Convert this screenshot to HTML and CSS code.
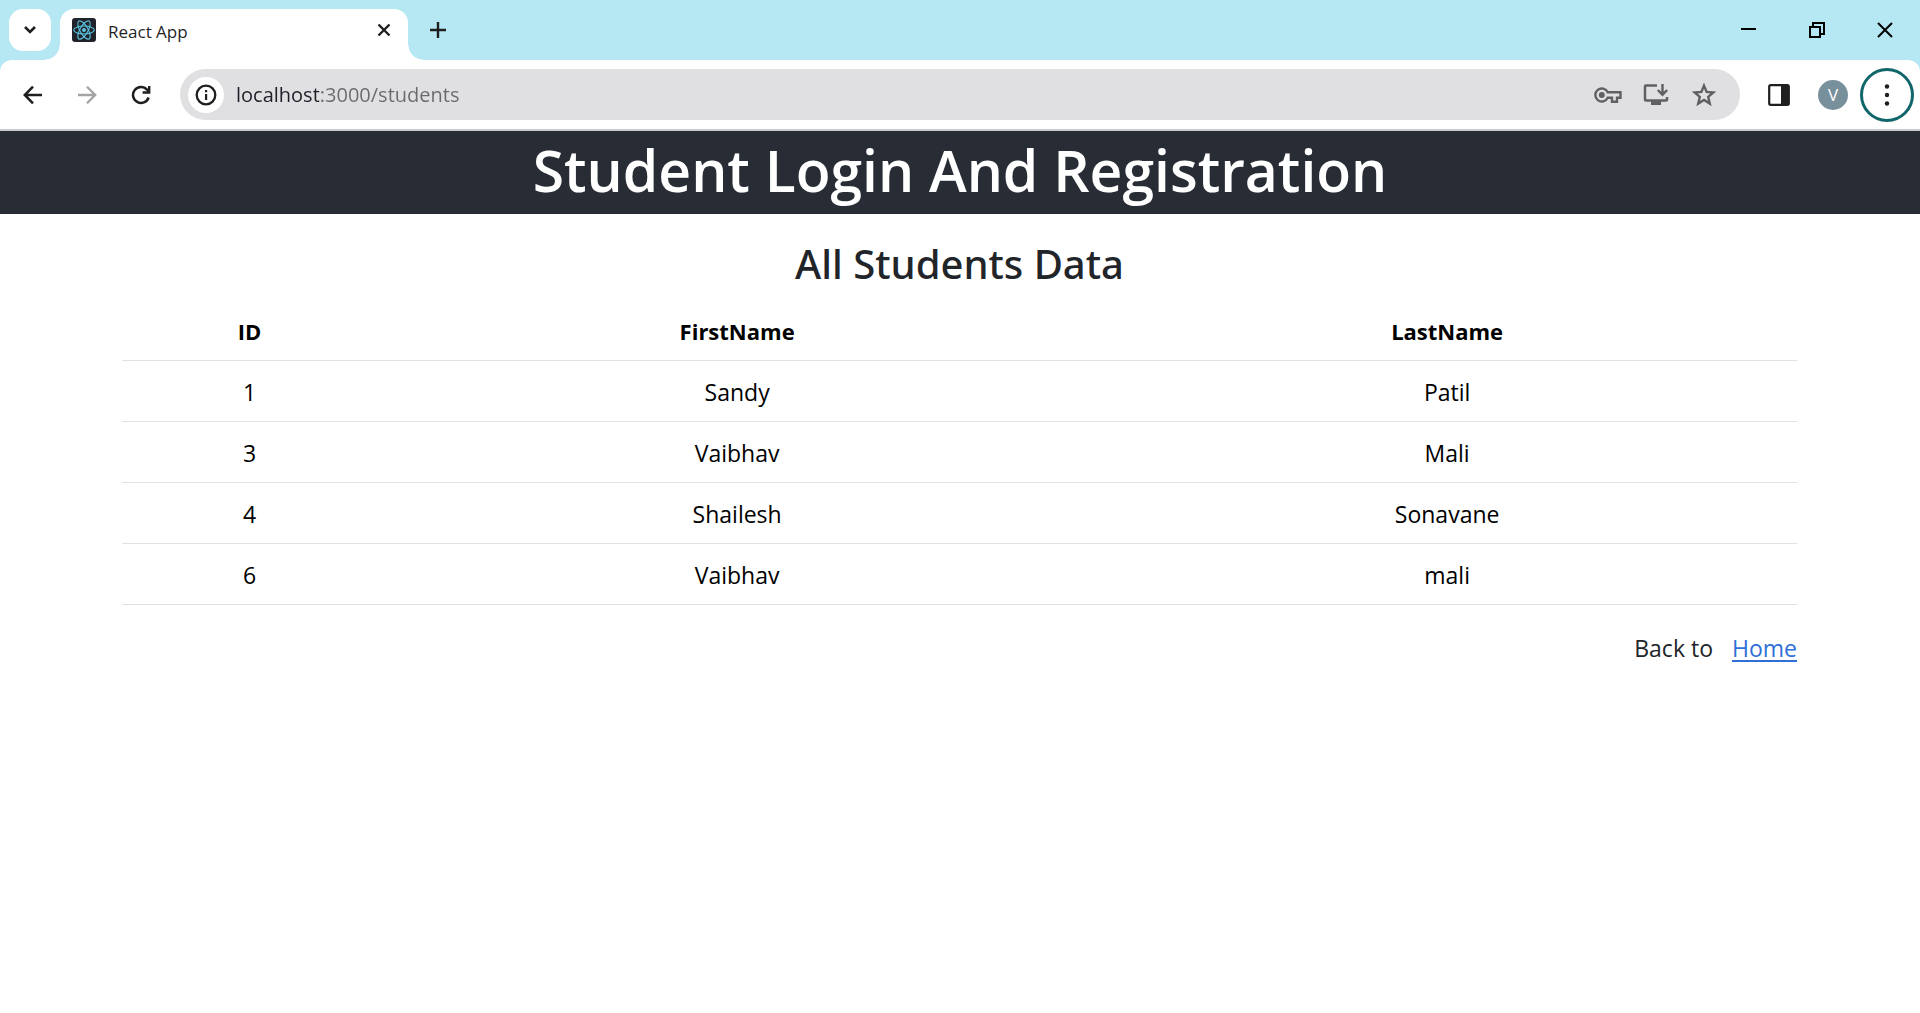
FILE: index.html
```
<!DOCTYPE html>
<html lang="en">
<head>
<meta charset="utf-8">
<meta name="viewport" content="width=device-width, initial-scale=1">
<title>React App</title>
<link rel="stylesheet" href="styles.css">
</head>
<body>
<div class="browser">
  <div class="tab-strip">
    <button class="tab-search" type="button" aria-label="Search tabs">
      <svg width="14" height="10" viewBox="0 0 14 10"><path d="M2 2l5 5 5-5" fill="none" stroke="#1f1f1f" stroke-width="2.6"/></svg>
    </button>
    <div class="tab">
      <svg class="favicon" width="24" height="24" viewBox="0 0 24 24">
        <rect width="24" height="24" rx="3" fill="#20232a"/>
        <g fill="none" stroke="#5cc4e0" stroke-width="1.1">
          <ellipse cx="12" cy="12" rx="10.3" ry="4"/>
          <ellipse cx="12" cy="12" rx="10.3" ry="4" transform="rotate(60 12 12)"/>
          <ellipse cx="12" cy="12" rx="10.3" ry="4" transform="rotate(120 12 12)"/>
        </g>
        <circle cx="12" cy="12" r="2" fill="#5cc4e0"/>
      </svg>
      <span class="tab-title">React App</span>
      <button class="icon-button" type="button" aria-label="Close tab">
        <svg width="14" height="14" viewBox="0 0 14 14"><path d="M1.500 1.500l11 11M12.500 1.500l-11 11" fill="none" stroke="#1f1f1f" stroke-width="2.400"/></svg>
      </button>
    </div>
    <button class="icon-button new-tab" type="button" aria-label="New tab">
      <svg width="16" height="16" viewBox="0 0 16 16"><path d="M8 0v16M0 8h16" fill="none" stroke="#1f1f1f" stroke-width="2.400"/></svg>
    </button>
    <div class="window-controls">
      <button class="icon-button" type="button" aria-label="Minimize">
        <svg width="16" height="16" viewBox="0 0 16 16"><path d="M0 6h15v2H0z" fill="#000"/></svg>
      </button>
      <button class="icon-button" type="button" aria-label="Restore">
        <svg width="16" height="16" viewBox="0 0 16 16"><path d="M1 5h10v10H1zM4 4.500V1h11v11h-3.500" fill="none" stroke="#000" stroke-width="2"/></svg>
      </button>
      <button class="icon-button" type="button" aria-label="Close window">
        <svg width="16" height="16" viewBox="0 0 16 16"><path d="M1 1l14 14M15 1L1 15" fill="none" stroke="#000" stroke-width="2"/></svg>
      </button>
    </div>
  </div>
  <div class="toolbar">
    <div class="nav-buttons">
      <button class="icon-button" type="button" aria-label="Back">
        <svg width="20" height="20" viewBox="0 0 20 20"><path d="M19 10H2.500M10 1.700L1.800 10l8.200 8.300" fill="none" stroke="#1f1f1f" stroke-width="2.500"/></svg>
      </button>
      <button class="icon-button" type="button" aria-label="Forward">
        <svg width="20" height="20" viewBox="0 0 20 20"><path d="M1 10h16.500M10 1.700l8.200 8.300-8.200 8.300" fill="none" stroke="#a3a3a3" stroke-width="2.300"/></svg>
      </button>
      <button class="icon-button" type="button" aria-label="Reload">
        <svg width="20" height="20" viewBox="0 0 20 20"><path d="M17.600 12.500A8 8 0 1 1 16 4.600l1.500 1.900" fill="none" stroke="#1f1f1f" stroke-width="2.500"/><path d="M18.200 1v6.500h-6.600" fill="none" stroke="#1f1f1f" stroke-width="2.400"/></svg>
      </button>
    </div>
    <div class="address-bar">
      <button class="site-info" type="button" aria-label="View site information">
        <svg width="22" height="22" viewBox="0 0 22 22"><circle cx="11" cy="11" r="9.300" fill="none" stroke="#1f1f1f" stroke-width="2.300"/><path d="M10 10h2.200v6H10zM10 6h2.200v2.200H10z" fill="#1f1f1f"/></svg>
      </button>
      <input class="address" type="text" value="localhost:3000/students" aria-label="Address">
      <button class="icon-button" type="button" aria-label="Passwords">
        <svg width="28" height="18" viewBox="0 0 28 18"><path d="M13.700 6.200A6.500 6.500 0 1 0 13.700 11.800H18v4h5v-4h3.500V6.200z" fill="none" stroke="#5f6062" stroke-width="2.400"/><circle cx="7.800" cy="9" r="3" fill="#5f6062"/></svg>
      </button>
      <button class="icon-button" type="button" aria-label="Install app">
        <svg width="26" height="24" viewBox="0 0 26 24"><path d="M14 2.500H3Q2 2.500 2 3.500v13Q2 17.500 3 17.500h20q1 0 1-1V14" fill="none" stroke="#5f6062" stroke-width="2.500"/><path d="M8 18h10v4H8z" fill="#5f6062"/><path d="M19.500 1v10.500M14.800 7l4.700 4.700L24.200 7" fill="none" stroke="#5f6062" stroke-width="2.400"/></svg>
      </button>
      <button class="icon-button" type="button" aria-label="Bookmark this page">
        <svg width="24" height="24" viewBox="0 0 24 24"><path d="M12 2.600l2.600 6.300 6.800.6-5.200 4.400 1.600 6.700-5.800-3.600-5.800 3.600 1.600-6.700-5.200-4.400 6.800-.6z" fill="none" stroke="#5f6062" stroke-width="2.400"/></svg>
      </button>
    </div>
    <div class="actions">
      <button class="icon-button" type="button" aria-label="Side panel">
        <svg width="22" height="22" viewBox="0 0 22 22"><rect x="1.200" y="1.200" width="19.600" height="19.600" rx="1.500" fill="none" stroke="#1f1f1f" stroke-width="2.200"/><path d="M13 1h8v20h-8z" fill="#1f1f1f"/></svg>
      </button>
      <button class="avatar" type="button" aria-label="Profile">V</button>
      <button class="menu" type="button" aria-label="Menu">
        <svg width="6" height="22" viewBox="0 0 6 22"><g fill="#1f1f1f"><circle cx="3" cy="2.500" r="2.200"/><circle cx="3" cy="11" r="2.200"/><circle cx="3" cy="19.500" r="2.200"/></g></svg>
      </button>
    </div>
  </div>
</div>

<header class="app-header"><h1>Student Login And Registration</h1></header>

<main class="content">
  <h2>All Students Data</h2>
  <table class="students">
    <colgroup><col class="col-id"><col class="col-first"><col class="col-last"></colgroup>
    <thead>
      <tr><th scope="col">ID</th><th scope="col">FirstName</th><th scope="col">LastName</th></tr>
    </thead>
    <tbody>
      <tr><td>1</td><td>Sandy</td><td>Patil</td></tr>
      <tr><td>3</td><td>Vaibhav</td><td>Mali</td></tr>
      <tr><td>4</td><td>Shailesh</td><td>Sonavane</td></tr>
      <tr><td>6</td><td>Vaibhav</td><td>mali</td></tr>
    </tbody>
  </table>
  <p class="back">Back to <a href="#home">Home</a></p>
</main>
</body>
</html>
```
FILE: styles.css
```
* {
  box-sizing: border-box;
}

body {
  margin: 0;
  background: #fff;
  color: #212529;
  font-family: "Segoe UI", "Open Sans", "Noto Sans", sans-serif;
  font-size: 23px;
  line-height: 36px;
}

button {
  padding: 0;
  border: 0;
  background: none;
  font: inherit;
}

svg {
  display: block;
}

.browser {
  background: #b5e8f2;
}

.tab-strip {
  display: flex;
  align-items: flex-start;
  height: 60px;
  padding: 9px 9px 0;
}

.tab-search {
  display: grid;
  place-items: center;
  width: 42px;
  height: 42px;
  margin-right: 9px;
  border-radius: 14px;
  background: #fff;
}

.tab {
  position: relative;
  display: flex;
  align-items: center;
  width: 348px;
  height: 51px;
  padding: 0 9px 9px 12px;
  border-radius: 14px 14px 0 0;
  background: #fff;
}

/* Outward curves where the tab meets the toolbar */
.tab::before,
.tab::after {
  content: "";
  position: absolute;
  bottom: 0;
  width: 15px;
  height: 15px;
}

.tab::before {
  right: 100%;
  background: radial-gradient(circle at 0 0, transparent 14px, #fff 15px);
}

.tab::after {
  left: 100%;
  background: radial-gradient(circle at 100% 0, transparent 14px, #fff 15px);
}

.tab-title {
  flex: 1;
  padding: 3px 0 0 12px;
  color: #1f1f1f;
  font-size: 17px;
  line-height: 24px;
}

.icon-button {
  display: grid;
  place-items: center;
  width: 30px;
  height: 42px;
}

.new-tab {
  margin-left: 15px;
}

.window-controls {
  display: flex;
  gap: 38px;
  margin-left: auto;
  margin-right: 11px;
}

.toolbar {
  display: flex;
  align-items: center;
  height: 71px;
  padding: 0 6px 0 18px;
  border-bottom: 2px solid #c8cbcd;
  border-radius: 12px 12px 0 0;
  background: #fff;
}

.nav-buttons {
  display: flex;
  gap: 24px;
}

.address-bar {
  display: flex;
  flex: 1;
  align-items: center;
  gap: 18px;
  height: 51px;
  margin-left: 24px;
  padding: 0 21px 0 8px;
  border-radius: 26px;
  background: #e0e0e2;
}

.site-info {
  display: grid;
  place-items: center;
  width: 36px;
  height: 36px;
  border-radius: 50%;
  background: #fff;
}

.address {
  flex: 1;
  min-width: 0;
  margin-left: -6px;
  padding: 0;
  border: 0;
  outline: 0;
  /* Host name dark, port and path grey */
  background: linear-gradient(to right, #1f1f2a 83px, #6a6a6c 83px) text;
  color: transparent;
  font: inherit;
  font-size: 20px;
  line-height: 30px;
}

.actions {
  display: flex;
  align-items: center;
  margin-left: 24px;
}

.avatar {
  width: 30px;
  height: 30px;
  margin: 0 12px 0 24px;
  border-radius: 50%;
  background: #78909c;
  color: #fff;
  font-size: 17px;
  line-height: 30px;
}

.menu {
  display: grid;
  place-items: center;
  width: 54px;
  height: 54px;
  border: 3px solid #11666a;
  border-radius: 50%;
}

.app-header {
  padding: 3px 0 8px;
  background: #282c34;
  color: #fff;
  text-align: center;
}

h1 {
  margin: 0;
  font-size: 57px;
  font-weight: 600;
  line-height: 72px;
}

.content {
  padding: 24px 123px 0 122px;
}

h2 {
  margin: 0 0 11px;
  font-family: "Segoe UI", "Noto Sans", sans-serif;
  font-size: 40px;
  font-weight: 500;
  line-height: 51px;
  text-align: center;
}

.students {
  width: 100%;
  table-layout: fixed;
  border-collapse: collapse;
  color: #000;
  text-align: center;
}

.col-id {
  width: 255px;
}

.col-first {
  width: 43%;
}

.students th,
.students td {
  padding: 13px 12px 11px;
  border-bottom: 1px solid #dee2e6;
}

.students th {
  font-size: 22px;
  font-weight: 700;
}

.back {
  display: flex;
  justify-content: flex-end;
  gap: 19px;
  margin: 25px 0 0;
}

.back a {
  color: #2f6fd6;
  text-underline-offset: 3px;
}
```
